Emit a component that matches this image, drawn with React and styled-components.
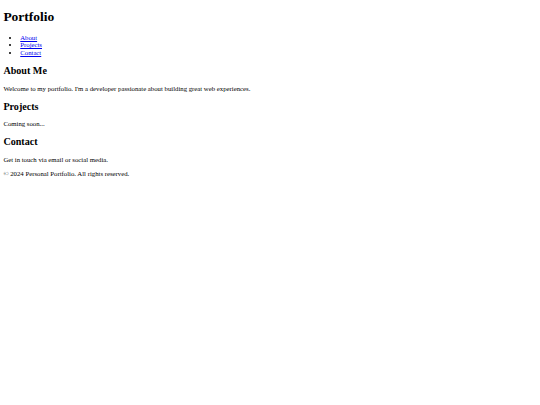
import React from 'react'
import styled, {createGlobalStyle} from 'styled-components'

// reference looks like a 1280px wide page shrunk to 540px
const scale = 540 / 1280

const GlobalStyle = createGlobalStyle`
  html, body {
    background: #fff;
  }
  body {
    margin: ${8 * scale}px;
    font-family: "Liberation Serif", "Times New Roman", serif;
    font-size: ${16 * scale}px;
    line-height: 1.125;
    color: #000;
  }
`

const Header = styled.header``

const Title = styled.h1`
  font-size: 2em;
  font-weight: bold;
  margin: 6px 0 0.67em;
`

const NavList = styled.ul`
  margin: 1em 0;
  padding-left: ${40 * scale}px;
  list-style: disc;
`

const NavLink = styled.a`
  color: #0000ee;
  text-decoration: underline;
`

const Section = styled.section``

const Heading = styled.h2`
  font-size: 1.5em;
  font-weight: bold;
  margin: 0.83em 0;
`

const Text = styled.p`
  margin: 1em 0;
`

const links = ['About', 'Projects', 'Contact']

const sections = [
  {id: 'about', title: 'About Me', text: "Welcome to my portfolio. I'm a developer passionate about building great web experiences."},
  {id: 'projects', title: 'Projects', text: 'Coming soon...'},
  {id: 'contact', title: 'Contact', text: 'Get in touch via email or social media.'},
]

export default function App() {
  return (
    <>
      <GlobalStyle/>
      <Header>
        <Title>Portfolio</Title>
        <nav>
          <NavList>
            {links.map(l => (
              <li key={l}><NavLink href={`#${l.toLowerCase()}`}>{l}</NavLink></li>
            ))}
          </NavList>
        </nav>
      </Header>
      <main>
        {sections.map(s => (
          <Section key={s.id} id={s.id}>
            <Heading>{s.title}</Heading>
            <Text>{s.text}</Text>
          </Section>
        ))}
      </main>
      <footer>
        <Text>© 2024 Personal Portfolio. All rights reserved.</Text>
      </footer>
    </>
  )
}
